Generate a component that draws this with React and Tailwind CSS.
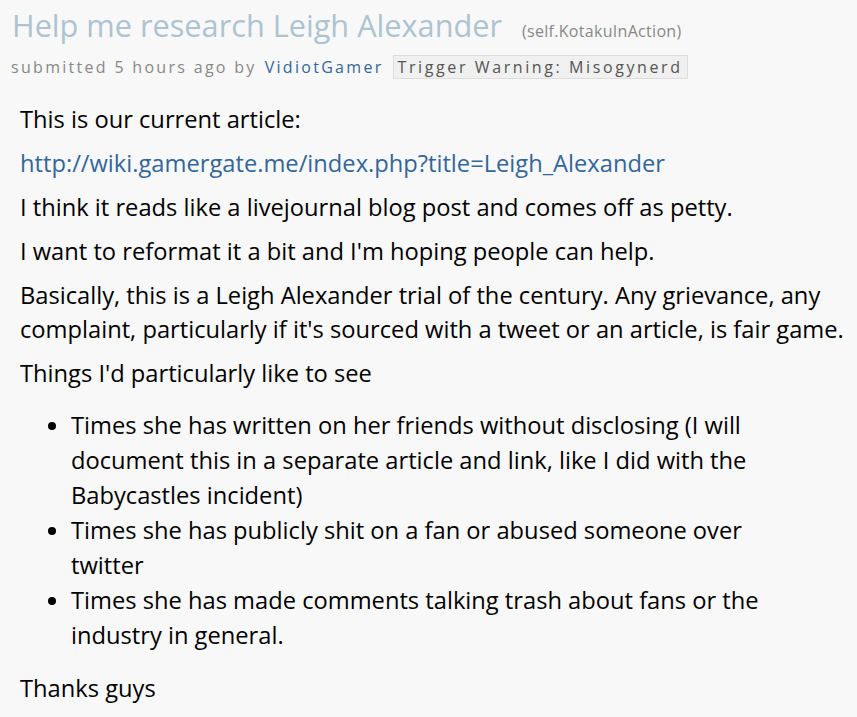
import React from "react";

const font = { fontFamily: '"Open Sans", "Noto Sans", sans-serif' };

const App = () => {
  return (
    <div className="min-h-[717px] w-[857px] bg-[#f8f8f8] text-black" style={font}>
      <div className="pl-[12px] pt-[4px]">
        <div className="flex items-baseline">
          <span className="text-[30.7px] leading-[42px] text-[#adc3d0]">Help me research Leigh Alexander</span>
          <span className="ml-[20px] text-[16px] tracking-[0.3px] text-[#888]">(self.KotakuInAction)</span>
        </div>
        <div className="mt-[9px] flex items-center text-[16px] leading-[24px] tracking-[2.3px] text-[#888]">
          <span className="-ml-[1px]">submitted 5 hours ago by</span>
          <span className="ml-[8px] text-[#369]">VidiotGamer</span>
          <span className="ml-[9px] border border-[#ddd] bg-[#f0f0f0] px-[4px] leading-[22px] tracking-[2.6px] text-[#555]">Trigger Warning: Misogynerd</span>
        </div>
      </div>
      <div className="mt-[23px] whitespace-nowrap pl-[20px] text-[23.7px] leading-[34px]">
        <p className="mb-[10px]">This is our current article:</p>
        <p className="mb-[10px]">
          <a className="text-[#369]" href="#">http://wiki.gamergate.me/index.php?title=Leigh_Alexander</a>
        </p>
        <p className="mb-[10px]">I think it reads like a livejournal blog post and comes off as petty.</p>
        <p className="mb-[10px]">I want to reformat it a bit and I'm hoping people can help.</p>
        <p className="mb-[10px]">
          Basically, this is a Leigh Alexander trial of the century. Any grievance, any
          <br />
          complaint, particularly if it's sourced with a tweet or an article, is fair game.
        </p>
        <p>Things I'd particularly like to see</p>
        <ul className="my-[18px] list-disc pl-[51px] leading-[35px]">
          <li>
            Times she has written on her friends without disclosing (I will
            <br />
            document this in a separate article and link, like I did with the
            <br />
            Babycastles incident)
          </li>
          <li>
            Times she has publicly shit on a fan or abused someone over
            <br />
            twitter
          </li>
          <li>
            Times she has made comments talking trash about fans or the
            <br />
            industry in general.
          </li>
        </ul>
        <p>Thanks guys</p>
      </div>
    </div>
  );
};

export default App;
